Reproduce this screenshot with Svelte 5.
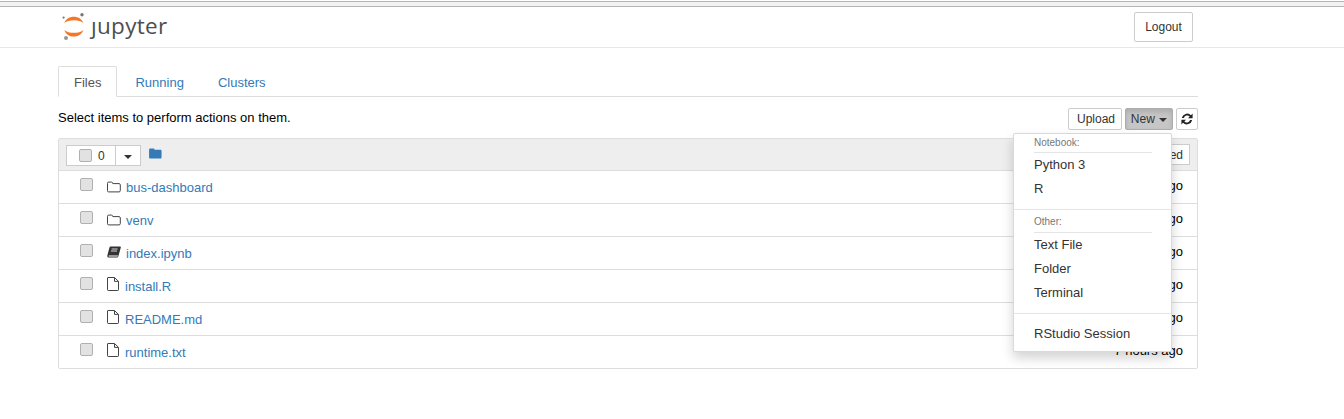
<script>
  const items = [
    { name: 'bus-dashboard', icon: 'folder', time: '7 hours ago' },
    { name: 'venv', icon: 'folder', time: '7 hours ago' },
    { name: 'index.ipynb', icon: 'book', time: '7 hours ago' },
    { name: 'install.R', icon: 'file', time: '7 hours ago' },
    { name: 'README.md', icon: 'file', time: '7 hours ago' },
    { name: 'runtime.txt', icon: 'file', time: '7 hours ago' }
  ];
</script>

<div class="topline"></div>

<header class="header">
  <div class="header-inner">
    <a class="logo" href="#top">
      <svg width="24" height="29" viewBox="0 0 24 29">
        <path d="M2.4 10C5 1.8 18.4 1.8 21.4 10C17.4 6.4 6.4 6.4 2.4 10Z" fill="#f37726"/>
        <path d="M2.4 17C5 25.8 18.4 25.8 21.4 17C17.4 20.8 6.4 20.8 2.4 17Z" fill="#f37726"/>
        <circle cx="20" cy="1.8" r="1.7" fill="#767677"/>
        <circle cx="1.6" cy="4.6" r="1.1" fill="#767677"/>
        <circle cx="4" cy="25" r="2" fill="#989798"/>
      </svg>
      <span class="wordmark">ȷupyter</span>
    </a>
    <button class="btn logout">Logout</button>
  </div>
</header>

<main class="page">
  <nav class="tabs">
    <a class="tab active" href="#files">Files</a>
    <a class="tab" href="#running">Running</a>
    <a class="tab" href="#clusters">Clusters</a>
  </nav>

  <div class="toolbar">
    <span class="hint">Select items to perform actions on them.</span>
    <div class="actions">
      <button class="btn small upload">Upload</button>
      <button class="btn small new">New <i class="caret"></i></button>
      <button class="btn small refresh" aria-label="Refresh">
        <svg width="12" height="12" viewBox="0 0 12 12">
          <path d="M11.6 0.6v4.6H7L8.7 3.5A3.5 3.5 0 0 0 2.9 5H0.8A5.5 5.5 0 0 1 10 2.2Z" fill="#222"/>
          <path d="M0.4 11.4V6.8H5L3.3 8.5A3.5 3.5 0 0 0 9.1 7h2.1A5.5 5.5 0 0 1 2 9.8Z" fill="#222"/>
        </svg>
      </button>

      <div class="menu">
        <div class="menu-head">Notebook:</div>
        <div class="menu-item">Python 3</div>
        <div class="menu-item">R</div>
        <div class="divider"></div>
        <div class="menu-head tall">Other:</div>
        <div class="menu-item">Text File</div>
        <div class="menu-item">Folder</div>
        <div class="menu-item">Terminal</div>
        <div class="divider last"></div>
        <div class="menu-item">RStudio Session</div>
      </div>
    </div>
  </div>

  <section class="list">
    <div class="list-head">
      <div class="select-group">
        <span class="select-main"><input type="checkbox" /> <span class="count">0</span></span>
        <span class="select-drop"><i class="caret dark"></i></span>
      </div>
      <svg class="home" width="13" height="11" viewBox="0 0 14 12">
        <path d="M1.4 0.6H4.6C5.5 0.6 5.9 1 6 2H12.2C13.1 2 13.6 2.5 13.6 3.4V10C13.6 10.9 13.1 11.4 12.2 11.4H1.4C0.5 11.4 0 10.9 0 10V2C0 1.1 0.5 0.6 1.4 0.6Z" fill="#337ab7"/>
      </svg>
      <button class="sort">Last Modified</button>
    </div>

    {#each items as item}
      <div class="row">
        <input type="checkbox" />
        <span class="icon {item.icon}">
          {#if item.icon === 'folder'}
            <svg width="14" height="12" viewBox="0 0 14 12" fill="none" stroke="#444" stroke-width="1">
              <path d="M1.6 1.1H4.6C5.3 1.1 5.6 1.5 5.8 2.6H12C12.8 2.6 13.3 3.1 13.3 3.8V9.7C13.3 10.5 12.8 10.9 12 10.9H1.6C0.9 10.9 0.5 10.5 0.5 9.7V2.3C0.5 1.5 0.9 1.1 1.6 1.1Z"/>
            </svg>
          {:else if item.icon === 'book'}
            <svg width="14" height="13" viewBox="0 0 14 13">
              <path d="M3.6 0.6H13.2C13.8 0.6 14 1 13.8 1.6L11.4 10.2C11.2 11 10.6 11.6 9.6 11.6H2C0.8 11.6 0 10.6 0.4 9.2L2.4 1.8C2.6 1 3 0.6 3.6 0.6Z" fill="#333"/>
              <path d="M1.8 9.4H11L10.6 10.6H2C1.5 10.6 1.4 9.8 1.8 9.4Z" fill="#fff"/>
              <path d="M4.6 3H10.6M4 5H10" stroke="#fff" stroke-width="0.8"/>
            </svg>
          {:else}
            <svg width="12" height="14" viewBox="0 0 12 14" fill="none" stroke="#444" stroke-width="1">
              <path d="M0.9 0.5H7.5L11.5 4.4V12.8C11.5 13.2 11.2 13.5 10.8 13.5H1.2C0.8 13.5 0.5 13.2 0.5 12.8V0.9C0.5 0.7 0.7 0.5 0.9 0.5Z"/>
              <path d="M7.5 0.7V4.4H11.3"/>
            </svg>
          {/if}
        </span>
        <a class="name" href="#item">{item.name}</a>
        <span class="time">{item.time}</span>
      </div>
    {/each}
  </section>
</main>

<style>
  :global(*) {
    box-sizing: border-box;
  }

  :global(body) {
    margin: 0;
    font-family: 'Liberation Sans', Arial, sans-serif;
    font-size: 13px;
    line-height: 18px;
    color: #000;
    background: #fff;
  }

  a {
    text-decoration: none;
    color: #337ab7;
  }

  .topline {
    margin-top: 1px;
    height: 6px;
    border-top: 1px solid #b4b4b4;
    border-bottom: 1px solid #b4b4b4;
    background: #f2f2f2;
  }

  /* Header */
  .header {
    height: 41px;
    border-bottom: 1px solid #e7e7e7;
  }

  .header-inner {
    width: 1140px;
    margin-left: 58px;
    display: flex;
    justify-content: space-between;
    padding-top: 5px;
  }

  .logo {
    display: flex;
    align-items: flex-start;
    gap: 5px;
    margin: 1px 0 0 4px;
    height: 29px;
  }

  .wordmark {
    font-family: 'Open Sans', sans-serif;
    font-size: 22.5px;
    line-height: 25px;
    color: #4e4e4e;
    letter-spacing: 0.3px;
  }

  .btn {
    font: inherit;
    color: #333;
    background: #fff;
    border: 1px solid #ccc;
    border-radius: 2px;
    padding: 0;
  }

  .logout {
    width: 59px;
    height: 30px;
    margin-right: 5px;
    font-size: 12px;
  }

  /* Tabs */
  .page {
    width: 1140px;
    margin-left: 58px;
    padding-top: 18px;
  }

  .tabs {
    display: flex;
    height: 31px;
    border-bottom: 1px solid #ddd;
  }

  .tab {
    height: 31px;
    padding: 7px 15px;
    margin-right: 2px;
    border: 1px solid transparent;
    border-radius: 2px 2px 0 0;
  }

  .tab.active {
    color: #555;
    border-color: #ddd #ddd #fff;
    background: #fff;
  }

  /* Toolbar */
  .toolbar {
    display: flex;
    justify-content: space-between;
    align-items: flex-start;
    padding-top: 10px;
    height: 41px;
  }

  .hint {
    margin-top: 2px;
  }

  .actions {
    position: relative;
    display: flex;
    gap: 3px;
    margin-top: 1px;
  }

  .small {
    height: 22px;
    font-size: 12px;
    line-height: 18px;
  }

  .upload {
    width: 54px;
    padding-left: 2px;
  }

  .new {
    width: 48px;
    background: #c6c6c6;
    border-color: #adadad;
    box-shadow: inset 0 3px 5px rgba(0, 0, 0, 0.125);
  }

  .refresh {
    width: 22px;
    display: flex;
    align-items: center;
    justify-content: center;
  }

  .caret {
    display: inline-block;
    width: 0;
    height: 0;
    margin-left: 1px;
    vertical-align: middle;
    border-top: 4px solid #333;
    border-left: 4px solid transparent;
    border-right: 4px solid transparent;
  }

  /* New menu */
  .menu {
    position: absolute;
    z-index: 5;
    top: 25px;
    right: 26px;
    width: 159px;
    height: 219px;
    padding: 2px 0 0;
    background: #fff;
    border: 1px solid rgba(0, 0, 0, 0.15);
    border-radius: 2px;
    box-shadow: 0 6px 12px rgba(0, 0, 0, 0.175);
  }

  .menu-head {
    margin: 0 19px 0 20px;
    height: 17px;
    font-size: 10px;
    line-height: 14px;
    color: #777;
    border-bottom: 1px solid #e5e5e5;
  }

  .menu-head.tall {
    height: 18px;
  }

  .menu-item {
    padding: 3px 20px;
    height: 24px;
    color: #333;
  }

  .divider {
    height: 1px;
    margin: 8px 0 5px;
    background: #e5e5e5;
  }

  .divider.last {
    margin: 8px 0 8px;
  }

  /* List */
  .list {
    border: 1px solid #ddd;
    border-radius: 2px;
    height: 231px;
  }

  .list-head {
    position: relative;
    display: flex;
    align-items: flex-start;
    height: 32px;
    padding: 6px 7px;
    background: #eee;
    border-bottom: 1px solid #ddd;
  }

  .select-group {
    display: flex;
    height: 21px;
    background: #fff;
    border: 1px solid #ccc;
  }

  .select-main {
    display: flex;
    align-items: center;
    width: 49px;
    padding-left: 12px;
    gap: 6px;
    font-size: 12px;
    border-right: 1px solid #ccc;
    color: #333;
  }

  .count {
    color: #333;
  }

  .select-drop {
    width: 24px;
    text-align: center;
    line-height: 19px;
  }

  .caret.dark {
    margin: 0;
  }

  .home {
    margin: 3px 0 0 8px;
  }

  .sort {
    position: absolute;
    right: 7px;
    top: 5px;
    height: 21px;
    width: 90px;
    font: inherit;
    font-size: 12px;
    text-align: right;
    padding: 0 6px 0 0;
    color: #333;
    background: #fff;
    border: 1px solid #ccc;
  }

  input[type='checkbox'] {
    appearance: none;
    width: 13px;
    height: 13px;
    margin: 0;
    background: #e2e2e2;
    border: 1px solid #b0b0b0;
    border-radius: 2px;
    flex: none;
  }

  .row {
    display: flex;
    align-items: flex-start;
    height: 33px;
    padding-left: 21px;
    border-bottom: 1px solid #ddd;
    position: relative;
  }

  .row:last-child {
    border-bottom: 0;
    height: 32px;
  }

  .row input {
    margin-top: 7px;
  }

  .icon {
    display: flex;
    width: 19px;
    margin-left: 13px;
    margin-top: 10px;
  }

  .icon.book {
    margin-top: 9px;
    margin-left: 14px;
    width: 19px;
  }

  .icon.file {
    width: 18px;
    margin-left: 14px;
    margin-top: 7px;
  }

  .icon.folder {
    margin-left: 14px;
    width: 19px;
  }

  .name {
    margin-top: 8px;
  }

  .time {
    margin-left: auto;
    margin-right: 14px;
    margin-top: 6px;
    color: #000;
  }
</style>
